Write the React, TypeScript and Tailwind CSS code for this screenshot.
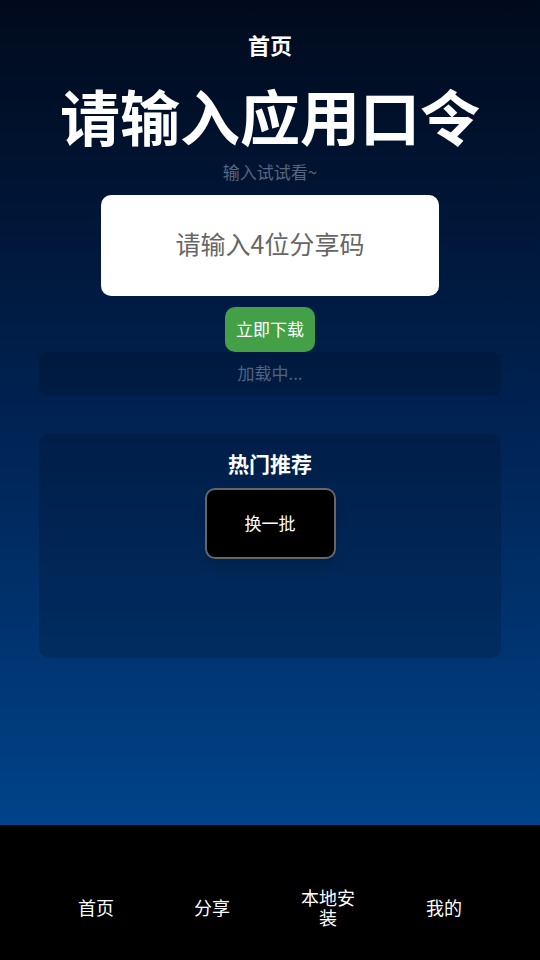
import React from "react";

const navItems = ["首页", "分享", "本地安装", "我的"];

export default function App() {
    return (
        <div
            className="flex flex-col h-[960px] w-full overflow-hidden"
            style={{ fontFamily: '"Noto Sans CJK SC", "Noto Sans", sans-serif' }}
        >
            <main className="flex-1 flex flex-col items-center bg-gradient-to-b from-[#000a1c] via-[#002252] to-[#00438a] px-[39px]">
                <h1 className="pt-[29px] text-[22px] leading-[30px] font-bold text-white">首页</h1>

                <h2 className="mt-[20px] text-[60px] leading-[72px] font-bold text-white">请输入应用口令</h2>
                <p className="mt-[9px] text-[17px] leading-[24px] text-[#56667f]">输入试试看~</p>

                {/* 输入框 */}
                <div className="mt-[11px] w-[338px] h-[101px] bg-white rounded-[10px] flex items-center justify-center pb-[3px]">
                    <span className="text-[25px] text-[#666666]">请输入4位分享码</span>
                </div>

                <button className="mt-[11px] w-[90px] h-[45px] rounded-[10px] bg-[#43a047] text-white text-[17px] pb-[2px]">
                    立即下载
                </button>

                <div className="w-full h-[44px] rounded-[9px] bg-black/15 flex items-center justify-center pb-[2px]">
                    <span className="text-[17px] text-[#4f6385]">加载中...</span>
                </div>

                {/* 热门推荐 */}
                <section className="mt-[38px] w-full h-[224px] rounded-[10px] bg-black/15 flex flex-col items-center pt-[15px]">
                    <h3 className="text-[21px] leading-[28px] font-bold text-white">热门推荐</h3>
                    <button className="mt-[11px] w-[131px] h-[71px] rounded-[10px] bg-black border-2 border-[#666666] text-white text-[17px] shadow-lg pb-[2px]">
                        换一批
                    </button>
                </section>
            </main>

            <nav className="h-[135px] bg-black flex items-center px-[38px] pt-[29px]">
                {navItems.map((label) => (
                    <div key={label} className="flex-1 flex justify-center">
                        <span className="max-w-[56px] text-center text-[18px] leading-[20px] text-white">{label}</span>
                    </div>
                ))}
            </nav>
        </div>
    );
}
